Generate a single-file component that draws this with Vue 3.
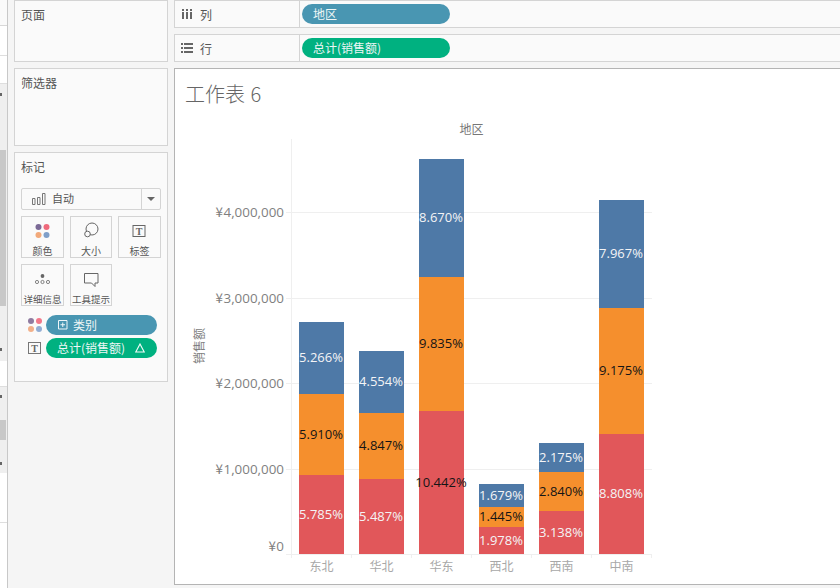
<script setup>
const baseY = 554
const regions = [
  { name: '东北', x: 299, tops: [322, 394, 475], labels: ['5.266%', '5.910%', '5.785%'], dark: [false, true, false] },
  { name: '华北', x: 359, tops: [351, 413, 479], labels: ['4.554%', '4.847%', '5.487%'], dark: [false, true, false] },
  { name: '华东', x: 419, tops: [159, 277, 411], labels: ['8.670%', '9.835%', '10.442%'], dark: [false, true, true] },
  { name: '西北', x: 479, tops: [484, 507, 527], labels: ['1.679%', '1.445%', '1.978%'], dark: [false, true, false] },
  { name: '西南', x: 539, tops: [443, 472, 511], labels: ['2.175%', '2.840%', '3.138%'], dark: [false, true, false] },
  { name: '中南', x: 599, tops: [200, 308, 434], labels: ['7.967%', '9.175%', '8.808%'], dark: [false, true, false] }
]
const colors = ['#4e79a7', '#f58f2d', '#e1575a']
const segments = regions.flatMap((r) =>
  r.tops.map((top, i) => {
    const bottom = i < 2 ? r.tops[i + 1] : baseY
    return {
      key: r.name + i,
      x: r.x,
      y: top,
      h: bottom - top,
      fill: colors[i],
      label: r.labels[i],
      text: r.dark[i] ? '#151515' : '#f4f4f6',
      ty: (top + bottom) / 2 + 4
    }
  })
)
const yAxis = [
  { num: '4,000,000', y: 212.5, ty: 217, grid: true },
  { num: '3,000,000', y: 298.5, ty: 303, grid: true },
  { num: '2,000,000', y: 383.5, ty: 388, grid: true },
  { num: '1,000,000', y: 469.5, ty: 474, grid: true },
  { num: '0', y: 554.5, ty: 551, grid: false }
]
const ticks = [291, 351, 411, 471, 531, 591, 651]
</script>

<template>
  <div class="page">
    <div class="strip">
      <div class="s-row s-soft" style="height: 26px"></div>
      <div class="s-row s-white" style="height: 30px"></div>
      <div class="s-row s-white" style="height: 28px"></div>
      <div class="s-row s-grey" style="height: 66px"><i class="nub nub-a"></i></div>
      <div class="s-row s-block" style="height: 156px"></div>
      <div class="s-row s-grey" style="height: 55px"><i class="nub nub-b"></i></div>
      <div class="s-row s-white" style="height: 26px"></div>
      <div class="s-row s-grey" style="height: 33px"><i class="nub nub-c"></i></div>
      <div class="s-row s-block" style="height: 20px"></div>
      <div class="s-row s-grey" style="height: 33px"><i class="nub nub-d"></i></div>
      <div class="s-row s-white" style="height: 50px"></div>
      <div class="s-row s-white s-last"></div>
    </div>

    <aside class="side">
      <section class="panel panel-pages"><h3>页面</h3></section>
      <section class="panel panel-filters"><h3>筛选器</h3></section>
      <section class="panel panel-marks">
        <h3>标记</h3>
        <div class="select">
          <svg class="select-icon" width="14" height="12" viewBox="0 0 14 12">
            <path d="M.5 5.500h2.500v6h-2.500zM5.500 4.500h2.500v7h-2.500zM10.500 .5h2.500v11h-2.500z" fill="none" stroke="#777" />
          </svg>
          <span class="select-text">自动</span>
          <span class="select-arrow"><i></i></span>
        </div>
        <div class="cards">
          <div class="card">
            <svg width="24" height="22" viewBox="0 0 24 22">
              <circle cx="7.500" cy="8" r="3" fill="#7b6a96" />
              <circle cx="15.500" cy="8" r="3" fill="#ef6a7c" />
              <circle cx="7.500" cy="16" r="3" fill="#f2a97a" />
              <circle cx="15.500" cy="16" r="3" fill="#7f9fc9" />
            </svg>
            <span>颜色</span>
          </div>
          <div class="card">
            <svg width="24" height="22" viewBox="0 0 24 22">
              <circle cx="13" cy="10" r="6" fill="none" stroke="#666" />
              <circle cx="8.500" cy="15" r="2.800" fill="#fafafa" stroke="#666" />
            </svg>
            <span>大小</span>
          </div>
          <div class="card">
            <svg width="24" height="22" viewBox="0 0 24 22">
              <rect x="5" y="6.500" width="12" height="11" fill="none" stroke="#666" />
              <text x="11" y="15.500" text-anchor="middle" class="t-glyph">T</text>
            </svg>
            <span>标签</span>
          </div>
          <div class="card">
            <svg width="24" height="22" viewBox="0 0 24 22">
              <circle cx="11.500" cy="9" r="1.900" fill="#666" />
              <circle cx="6" cy="15" r="1.600" fill="none" stroke="#666" stroke-width=".8" />
              <circle cx="11.500" cy="15" r="1.600" fill="none" stroke="#666" stroke-width=".8" />
              <circle cx="17" cy="15" r="1.600" fill="none" stroke="#666" stroke-width=".8" />
            </svg>
            <span class="tight">详细信息</span>
          </div>
          <div class="card">
            <svg width="24" height="22" viewBox="0 0 24 22">
              <path d="M5.500 6.500h13.500v9.500h-3v3.500l-3.500-3.500h-7z" fill="none" stroke="#666" />
            </svg>
            <span class="tight">工具提示</span>
          </div>
        </div>
        <div class="encoding">
          <svg width="16" height="16" viewBox="0 0 16 16">
            <circle cx="4" cy="4" r="3" fill="#8f7ba0" />
            <circle cx="12" cy="4" r="3" fill="#f2788a" />
            <circle cx="4" cy="12" r="3" fill="#f2b08a" />
            <circle cx="12" cy="12" r="3" fill="#92add4" />
          </svg>
          <div class="pill pill-blue enc-pill">
            <svg class="plus" width="10" height="10" viewBox="0 0 10 10">
              <path d="M.5.500h8.500v8.500h-8.500zM4.750 2.500v4.500M2.500 4.750h4.500" fill="none" stroke="#eef6f9" />
            </svg>
            <span>类别</span>
          </div>
        </div>
        <div class="encoding">
          <svg width="16" height="16" viewBox="0 0 16 16">
            <rect x="1.500" y="2.500" width="12" height="11" fill="none" stroke="#777" />
            <text x="7.500" y="12" text-anchor="middle" class="t-glyph">T</text>
          </svg>
          <div class="pill pill-green enc-pill enc-pill-green">
            <span>总计(销售额)</span>
            <svg width="10" height="10" viewBox="0 0 10 10">
              <path d="M5 1 .8 9h8.400z" fill="none" stroke="#f2fbf8" stroke-width="1.100" />
            </svg>
          </div>
        </div>
      </section>
    </aside>

    <main class="main">
      <div class="shelf">
        <div class="shelf-head">
          <svg class="ic-cols" width="10" height="10" viewBox="0 0 10 10">
            <path d="M0 3h2v7H0zM4 3h2v7H4zM8 3h2v7H8zM0 0h2v2H0zM4 0h2v2H4zM8 0h2v2H8z" fill="#666" />
          </svg>
          <span>列</span>
        </div>
        <div class="shelf-body"><div class="pill pill-blue shelf-pill">地区</div></div>
      </div>
      <div class="shelf">
        <div class="shelf-head">
          <svg class="ic-rows" width="12" height="10" viewBox="0 0 12 10">
            <path d="M0 0h2v2H0zM3 0h9v2H3zM0 4h2v2H0zM3 4h9v2H3zM0 8h2v2H0zM3 8h9v2H3z" fill="#666" />
          </svg>
          <span>行</span>
        </div>
        <div class="shelf-body"><div class="pill pill-green shelf-pill">总计(销售额)</div></div>
      </div>
      <div class="sheet">
        <h1 class="title">工作表 6</h1>
        <svg class="chart" width="665" height="464" viewBox="175 120 665 464">
          <text x="471.500" y="134" text-anchor="middle" class="head">地区</text>
          <line x1="291.500" y1="139" x2="291.500" y2="554" class="grid" />
          <template v-for="a in yAxis" :key="a.num">
            <line v-if="a.grid" x1="286" :y1="a.y" x2="652" :y2="a.y" class="grid" />
            <text x="284" :y="a.ty" text-anchor="end" class="axis"><tspan class="yen">¥</tspan>{{ a.num }}</text>
          </template>
          <text transform="translate(204 346) rotate(-90)" text-anchor="middle" class="measure">销售额</text>
          <line x1="286" y1="554.500" x2="652" y2="554.500" class="grid" />
          <line v-for="t in ticks" :key="t" :x1="t + 0.500" y1="554" :x2="t + 0.500" y2="558" class="grid" />
          <rect v-for="s in segments" :key="s.key" :x="s.x" :y="s.y" width="45" :height="s.h" :fill="s.fill" />
          <text
            v-for="s in segments"
            :key="'t' + s.key"
            :x="s.x + 22"
            :y="s.ty"
            text-anchor="middle"
            class="value"
            :fill="s.text"
          >{{ s.label }}</text>
          <text v-for="r in regions" :key="r.name" :x="r.x + 22.500" y="571" text-anchor="middle" class="cat">{{ r.name }}</text>
        </svg>
      </div>
    </main>
  </div>
</template>

<style scoped>
.page {
  display: flex;
  width: 840px;
  height: 588px;
  overflow: hidden;
  background: #f5f5f5;
  font-family: "Noto Sans CJK SC", "Open Sans", sans-serif;
  color: #555;
}
.strip {
  flex: none;
  width: 7px;
  height: 588px;
  border-right: 1px solid #c8c8c8;
  display: flex;
  flex-direction: column;
}
.s-row { flex: none; box-sizing: border-box; position: relative; }
.s-soft { background: #fafafa; border-bottom: 1px solid #d8d8d8; }
.s-white { background: #fff; border-bottom: 1px solid #dedede; }
.s-grey { background: #efefef; }
.s-block { background: linear-gradient(90deg, #c8c8c8 6px, #efefef 6px); }
.s-last { flex: 1; border-bottom: 0; }
.nub { position: absolute; left: 0; width: 2px; height: 3px; background: #666; }
.nub-a { top: 9px; }
.nub-b { top: 42px; }
.nub-c { top: 8px; }
.nub-d { top: 22px; }
.side {
  flex: none;
  width: 154px;
  margin-left: 6px;
  display: flex;
  flex-direction: column;
  gap: 6px;
}
.panel {
  box-sizing: border-box;
  background: #fafafa;
  border: 1px solid #d4d4d4;
  padding: 5px 6px 0;
}
.panel h3 {
  margin: 0;
  font-size: 12px;
  line-height: 18px;
  font-weight: 400;
  color: #555;
}
.panel-pages { height: 62px; }
.panel-filters { height: 78px; }
.panel-marks { height: 230px; }
.select {
  box-sizing: border-box;
  height: 22px;
  width: 140px;
  margin-top: 12px;
  border: 1px solid #d4d4d4;
  border-radius: 2px;
  display: flex;
  align-items: center;
  font-size: 11px;
}
.select-icon { margin-left: 10px; }
.select-text { margin-left: 6px; margin-top: -2px; flex: 1; color: #555; }
.select-arrow {
  width: 18px;
  height: 20px;
  border-left: 1px solid #d4d4d4;
  display: flex;
  align-items: center;
  justify-content: center;
}
.select-arrow i {
  width: 0;
  height: 0;
  border-left: 4px solid transparent;
  border-right: 4px solid transparent;
  border-top: 4px solid #666;
}
.cards {
  margin-top: 6px;
  display: grid;
  grid-template-columns: 43px 42px 43px;
  column-gap: 6px;
  row-gap: 6px;
}
.card {
  box-sizing: border-box;
  height: 42px;
  background: #fafafa;
  border: 1px solid #d4d4d4;
  display: flex;
  flex-direction: column;
  align-items: center;
  font-size: 10px;
  line-height: 14px;
  color: #555;
  overflow: hidden;
}
.card svg { display: block; flex: none; margin-top: 2px; }
.card span { margin-top: 3px; white-space: nowrap; }
.card .tight { font-size: 9.500px; }
.encoding {
  display: flex;
  align-items: center;
  height: 20px;
  margin-top: 3px;
  padding-left: 6px;
}
.cards + .encoding { margin-top: 9px; }
.encoding > svg { flex: none; margin-right: 3px; }
.enc-pill { width: 111px; }
.pill {
  box-sizing: border-box;
  height: 20px;
  border-radius: 10px;
  display: flex;
  align-items: center;
  color: #eef6f6;
  font-size: 12px;
  line-height: 20px;
  white-space: nowrap;
}
.pill-blue { background: #4996b2; }
.pill-green { background: #00b180; }
.plus { margin-left: 12px; margin-right: 5px; }
.enc-pill-green { padding-left: 11px; padding-right: 12px; justify-content: space-between; }
.main {
  flex: 1;
  margin-left: 6px;
  min-width: 0;
  display: flex;
  flex-direction: column;
  gap: 6px;
}
.shelf {
  box-sizing: border-box;
  flex: none;
  height: 28px;
  background: #fafafa;
  border-top: 1px solid #d4d4d4;
  border-bottom: 1px solid #d4d4d4;
  border-left: 1px solid #d4d4d4;
  display: flex;
}
.shelf-head {
  box-sizing: border-box;
  width: 125px;
  border-right: 1px solid #d4d4d4;
  display: flex;
  align-items: center;
  padding-left: 7px;
  font-size: 12px;
  color: #555;
}
.ic-cols { margin-right: 8px; }
.ic-rows { margin-left: -1px; margin-right: 7px; }
.shelf-body { flex: 1; display: flex; align-items: center; padding-left: 2px; }
.shelf-pill { width: 148px; padding-left: 11px; }
.sheet {
  box-sizing: border-box;
  flex: none;
  height: 517px;
  background: #fff;
  border-top: 1px solid #b4b4b4;
  border-left: 1px solid #b4b4b4;
  border-bottom: 1px solid #b4b4b4;
}
.title {
  margin: 0;
  height: 51px;
  padding: 11px 0 0 10px;
  box-sizing: border-box;
  font-size: 20px;
  line-height: 28px;
  font-weight: 300;
  color: #666;
  word-spacing: 1px;
}
.chart { display: block; }
.grid { stroke: #efefef; stroke-width: 1; }
.head { font: 400 12px "Noto Sans CJK SC", sans-serif; fill: #777; }
.axis { font: 400 13.400px "Open Sans", "Noto Sans CJK SC", sans-serif; fill: #7f7f7f; }
.yen { font-family: "Noto Sans CJK SC", sans-serif; letter-spacing: 0.500px; }
.measure { font: 400 12px "Noto Sans CJK SC", sans-serif; fill: #808080; }
.value { font: 400 13px "Open Sans", sans-serif; }
.cat { font: 400 12px "Noto Sans CJK SC", sans-serif; fill: #a8a8a8; }
.t-glyph { font: 700 10px "Liberation Serif", serif; fill: #666; }
</style>
